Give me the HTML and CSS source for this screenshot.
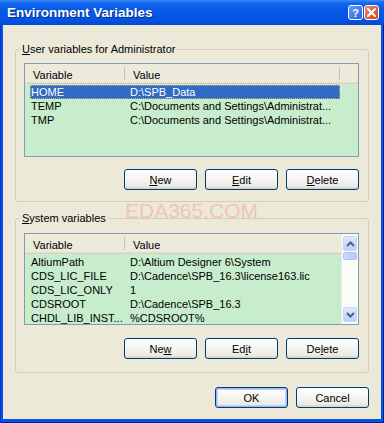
FILE: index.html
```html
<!DOCTYPE html>
<html lang="en">
<head>
    <meta charset="UTF-8">
    <meta name="viewport" content="width=device-width, initial-scale=1.0">
    <title>Environment Variables</title>
    <link rel="stylesheet" href="styles.css">
</head>
<body>
    <div class="window">
        <div class="titlebar">
            <span class="title">Environment Variables</span>
            <div class="caption-buttons">
                <span class="cap-btn help">?</span>
                <span class="cap-btn close">
                    <svg width="9" height="9" viewBox="0 0 9 9">
                        <path d="M1 1 L8 8 M8 1 L1 8" stroke="#fff" stroke-width="2" stroke-linecap="square"/>
                    </svg>
                </span>
            </div>
        </div>

        <div class="client">
            <fieldset class="group user-group">
                <legend><u>U</u>ser variables for Administrator</legend>
                <div class="list user-list">
                    <div class="list-main">
                        <div class="list-header">
                            <span class="hcol col-var">Variable</span>
                            <span class="hcol col-val">Value</span>
                            <span class="hcol col-fill"></span>
                        </div>
                        <div class="list-body">
                            <div class="row selected"><span class="cell-var">HOME</span><span class="cell-val">D:\SPB_Data</span></div>
                            <div class="row"><span class="cell-var">TEMP</span><span class="cell-val">C:\Documents and Settings\Administrat...</span></div>
                            <div class="row"><span class="cell-var">TMP</span><span class="cell-val">C:\Documents and Settings\Administrat...</span></div>
                        </div>
                    </div>
                </div>
                <div class="buttons">
                    <button class="btn"><u>N</u>ew</button>
                    <button class="btn"><u>E</u>dit</button>
                    <button class="btn"><u>D</u>elete</button>
                </div>
            </fieldset>

            <div class="watermark">EDA365.COM</div>

            <fieldset class="group system-group">
                <legend><u>S</u>ystem variables</legend>
                <div class="list system-list">
                    <div class="list-main">
                        <div class="list-header">
                            <span class="hcol col-var">Variable</span>
                            <span class="hcol col-val">Value</span>
                        </div>
                        <div class="list-body">
                            <div class="row"><span class="cell-var">AltiumPath</span><span class="cell-val">D:\Altium Designer 6\System</span></div>
                            <div class="row"><span class="cell-var">CDS_LIC_FILE</span><span class="cell-val">D:\Cadence\SPB_16.3\license163.lic</span></div>
                            <div class="row"><span class="cell-var">CDS_LIC_ONLY</span><span class="cell-val">1</span></div>
                            <div class="row"><span class="cell-var">CDSROOT</span><span class="cell-val">D:\Cadence\SPB_16.3</span></div>
                            <div class="row"><span class="cell-var">CHDL_LIB_INST...</span><span class="cell-val">%CDSROOT%</span></div>
                        </div>
                    </div>
                    <div class="scrollbar">
                        <span class="sb-btn">
                            <svg width="9" height="6" viewBox="0 0 9 6"><path d="M1 5 L4.5 1.5 L8 5" fill="none" stroke="#4d6185" stroke-width="2"/></svg>
                        </span>
                        <span class="sb-thumb"></span>
                        <span class="sb-track"></span>
                        <span class="sb-btn">
                            <svg width="9" height="6" viewBox="0 0 9 6"><path d="M1 1 L4.5 4.5 L8 1" fill="none" stroke="#4d6185" stroke-width="2"/></svg>
                        </span>
                    </div>
                </div>
                <div class="buttons">
                    <button class="btn">Ne<u>w</u></button>
                    <button class="btn">Ed<u>i</u>t</button>
                    <button class="btn">De<u>l</u>ete</button>
                </div>
            </fieldset>

            <div class="buttons dialog-buttons">
                <button class="btn default">OK</button>
                <button class="btn">Cancel</button>
            </div>
        </div>
    </div>
</body>
</html>
```

FILE: styles.css
```css
body {
    margin: 0;
    padding: 0;
    font-family: 'Liberation Sans', Arial, sans-serif;
    font-size: 11px;
    color: #000;
    background-color: #fff;
}

.window {
    width: 384px;
    height: 423px;
    display: flex;
    flex-direction: column;
    background-color: #0553e0;
    box-shadow: inset 1px 0 #0831d9, inset -1px 0 #001ea0, inset 0 -1px #001ea0;
}

/* title bar */
.titlebar {
    height: 25px;
    display: flex;
    align-items: center;
    padding: 0 5px 0 7px;
    background: linear-gradient(#3a8cfa 0, #1166ec 3px, #0659e6 40%, #0255e3 80%, #0448cf 100%);
}

.title {
    color: #fff;
    font-weight: bold;
    font-size: 13.5px;
    text-shadow: 1px 1px #0a2a8a;
}

.caption-buttons {
    margin-left: auto;
    display: flex;
    gap: 1px;
}

.cap-btn {
    width: 13px;
    height: 13px;
    border: 1px solid #fff;
    border-radius: 3px;
    display: flex;
    align-items: center;
    justify-content: center;
    color: #fff;
    font-weight: bold;
    font-size: 11px;
}

.cap-btn.help {
    background: linear-gradient(135deg, #6a9cf6, #2260e0);
}

.cap-btn.close {
    background: linear-gradient(135deg, #ee8a6a, #d6401e);
}

/* dialog body */
.client {
    flex: 1;
    margin: 0 3px 4px 3px;
    padding: 18px 12px 0 12px;
    background-color: #ece9d8;
    position: relative;
}

.group {
    margin: 0;
    padding: 7px 9px 11px 8px;
    border: 1px solid #d0d0bf;
    border-radius: 3px;
    min-width: 0;
}

.group legend {
    padding: 0 2px;
    margin-left: -4px;
    line-height: 13px;
    color: #000;
}

.system-group {
    margin-top: 10px;
    padding-top: 8px;
    padding-bottom: 13px;
}

.watermark {
    position: absolute;
    left: 122px;
    top: 175px;
    font-size: 21px;
    line-height: 21px;
    color: #efc4bf;
}

/* list views */
.list {
    display: flex;
    border: 1px solid #7f9db9;
    background-color: #c7edcc;
    box-sizing: border-box;
}

.user-list {
    height: 94px;
}

.system-list {
    height: 92px;
}

.list-main {
    flex: 1;
    min-width: 0;
}

.list-header {
    display: flex;
    height: 20px;
    background-color: #ebeadb;
    box-shadow: inset 0 -1px #d6d2c2, inset 0 -2px #e2decd;
}

.hcol {
    box-sizing: border-box;
    padding-left: 8px;
    padding-top: 1px;
    margin: 3px 0 4px;
    line-height: 14px;
}

.col-var {
    width: 100px;
    border-right: 1px solid #c7c5b2;
}

.col-val {
    width: 215px;
    border-right: 1px solid #c7c5b2;
}

.col-fill {
    flex: 1;
}

.system-list .col-val {
    flex: 1;
    border-right: none;
}

.list-body {
    padding-top: 1px;
}

.row {
    display: flex;
    height: 14px;
    line-height: 14px;
    margin-left: 5px;
    width: 310px;
    white-space: nowrap;
}

.row.selected {
    background-color: #316ac5;
    color: #fff;
    outline: 1px dotted #c9b46a;
    outline-offset: -1px;
}

.cell-var {
    width: 100px;
    padding-left: 1px;
    box-sizing: border-box;
    overflow: hidden;
}

.cell-val {
    flex: 1;
}

/* scrollbar */
.scrollbar {
    width: 17px;
    display: flex;
    flex-direction: column;
    padding: 2px 1px;
    box-sizing: border-box;
    background-color: #fbfbf8;
    border-left: 1px solid #eeede5;
}

.sb-btn {
    height: 15px;
    border: 1px solid #c6d5f8;
    border-radius: 2px;
    background: linear-gradient(#e0e9fd, #bcd0fa);
    display: flex;
    align-items: center;
    justify-content: center;
    box-sizing: border-box;
}

.sb-thumb {
    height: 8px;
    margin-top: 1px;
    border: 1px solid #b3c5f3;
    border-radius: 2px;
    background: linear-gradient(90deg, #c9d8fc, #b8cbf7);
    box-sizing: border-box;
}

.sb-track {
    flex: 1;
}

/* push buttons */
.buttons {
    display: flex;
    justify-content: flex-end;
    gap: 8px;
    margin-top: 12px;
}

.system-group .buttons {
    margin-top: 13px;
}

.dialog-buttons {
    margin-top: 14px;
}

.btn {
    width: 73px;
    height: 21px;
    padding: 0;
    font-family: 'Liberation Sans', Arial, sans-serif;
    font-size: 11px;
    color: #000;
    border: 1px solid #003c74;
    border-radius: 3px;
    background: linear-gradient(#ffffff 0, #f4f4f0 50%, #ecebe6 85%, #d6d0c5 100%);
}

.btn.default {
    box-shadow: inset 0 0 0 1px #9cb6ee, inset 0 0 0 2px #c3d4fb;
}
```
